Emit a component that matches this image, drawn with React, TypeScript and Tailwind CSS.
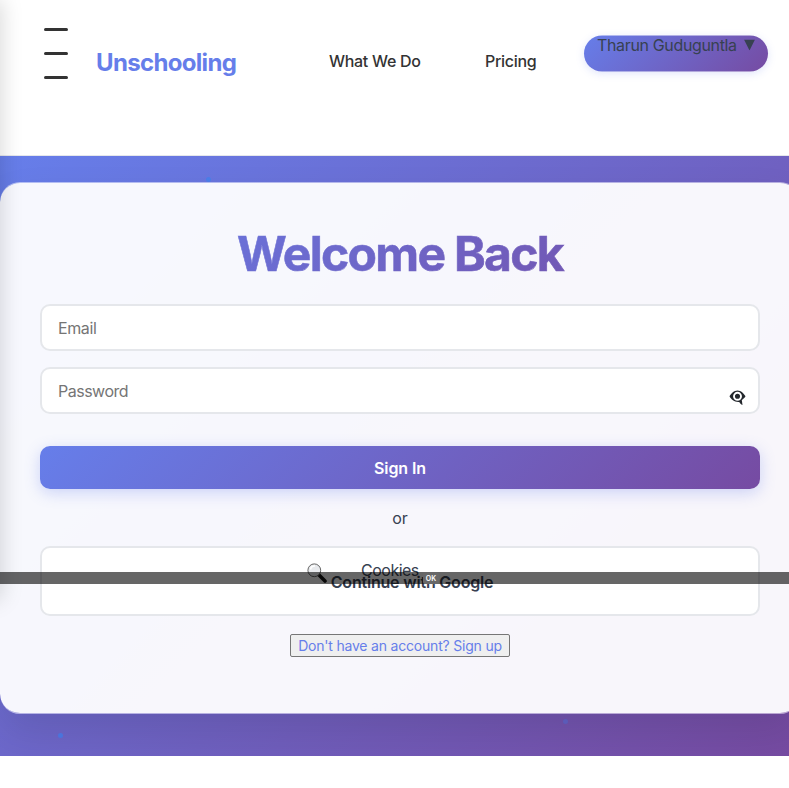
import React from "react";

const GRADIENT = "bg-[linear-gradient(135deg,#667eea_0%,#764ba2_100%)]";

function Header() {
  return (
    <header className="flex h-[156px] items-start border-b border-[#e5e7eb] bg-white pl-11 pr-[21px]">
      <button aria-label="Menu" className="mt-7 flex h-[51px] w-6 flex-col justify-between">
        <span className="h-[3px] w-6 rounded-[2px] bg-[#333]" />
        <span className="h-[3px] w-6 rounded-[2px] bg-[#333]" />
        <span className="h-[3px] w-6 rounded-[2px] bg-[#333]" />
      </button>
      <div className="ml-7 mt-[45px] w-[233px] whitespace-nowrap text-2xl leading-9 font-bold tracking-[-0.67px] text-[#667eea]">
        Unschooling
      </div>
      <nav className="mt-[49px] flex text-base leading-6 font-medium tracking-[-0.3px] whitespace-nowrap text-[#333]">
        <a className="w-[156px]">What We Do</a>
        <a>Pricing</a>
      </nav>
      <div
        className={`ml-auto mt-9 flex h-[36px] w-[184px] -translate-y-[0.5px] whitespace-nowrap rounded-[20px] pl-[13px] text-base leading-[18px] tracking-[-0.35px] text-[#374151] shadow-[0_2px_8px_rgba(102,126,234,0.2)] ${GRADIENT}`}
      >
        <span>Tharun Guduguntla</span>
        <svg className="ml-[7px] mt-[4px] h-[11px] w-[11px]" viewBox="0 0 11 11">
          <path d="M0 0H11L5.5 11Z" fill="#374151" />
        </svg>
      </div>
    </header>
  );
}

function Eye() {
  return (
    <svg className="absolute right-[12px] top-[20px] h-4 w-[17px]" viewBox="0 0 17 16">
      <path
        d="M.5 7.200C2.200 4.300 5 1.400 8.500 1.400s6.300 2.900 8 5.800c-1 1.600-2.100 2.800-3.700 3.800l.7 5c-1.600-.6-2.500-1.700-3.200-3.100C5.600 13.300 2.400 10.600.5 7.200Z"
        fill="#23272c"
      />
      <circle cx="8.500" cy="7.300" r="3.500" fill="#23272c" stroke="#fff" strokeWidth="1.900" />
    </svg>
  );
}

function Magnifier() {
  return (
    <svg className="mt-[15px] h-5 w-5 shrink-0" viewBox="0 0 20 20">
      <path d="M12 12L18 18" stroke="#161616" strokeWidth="3.600" strokeLinecap="round" />
      <circle cx="7.300" cy="7.300" r="6.400" fill="#e8eaed" stroke="#666" strokeWidth="1" />
      <path d="M3.500 6.500A4.300 4.300 0 0 1 8 3" fill="none" stroke="#fff" strokeWidth="1.500" />
    </svg>
  );
}

function LoginCard() {
  return (
    <div className="mt-[26px] flex h-[532px] w-[800px] shrink-0 flex-col rounded-[20px] border-y border-white/50 bg-white/95 bg-clip-padding px-10 shadow-[0_20px_40px_rgba(0,0,0,0.1)]">
      <h1
        className={`mt-[42px] h-[58px] whitespace-nowrap bg-clip-text text-center text-5xl leading-[58px] font-bold tracking-[-1.700px] text-transparent [-webkit-text-stroke:0.6px_transparent] ${GRADIENT}`}
      >
        Welcome Back
      </h1>
      <div className="mt-[21px] h-[47px] rounded-[10px] border-2 border-[#e5e7eb] bg-white px-4 text-base leading-[44px] tracking-[-0.4px] text-[#757575]">
        Email
      </div>
      <div className="relative mt-4 h-[47px] rounded-[10px] border-2 border-[#e5e7eb] bg-white px-4 text-base leading-[44px] tracking-[-0.5px] text-[#757575]">
        Password
        <Eye />
      </div>
      <button
        className={`mt-8 h-[43px] rounded-[10px] text-base leading-[45px] font-semibold tracking-[-0.1px] text-white shadow-[0_4px_15px_rgba(102,126,234,0.3)] ${GRADIENT}`}
      >
        Sign In
      </button>
      <div className="mt-[17px] text-center text-base leading-6 text-[#374151]">or</div>
      <button className="mt-4 flex h-[70px] justify-center rounded-[10px] border-2 border-[#e5e7eb] bg-white text-base font-semibold tracking-[-0.2px] text-[#374151]">
        <Magnifier />
        <span className="ml-1 mt-[22px] leading-6">Continue with Google</span>
      </button>
      <button className="mx-auto mt-[18px] h-[23px] w-[220px] whitespace-nowrap rounded-[2px] border border-[#767676] bg-[#efefef] text-sm leading-[21px] tracking-[-0.2px] text-[#667eea]">
        Don&#39;t have an account? Sign up
      </button>
    </div>
  );
}

export default function App() {
  return (
    <div className="relative h-[788px] w-full overflow-hidden bg-white font-['Inter',sans-serif]">
      <Header />
      <main className={`relative flex h-[600px] items-start overflow-hidden ${GRADIENT}`}>
        <i className="absolute left-[206px] top-[21px] size-[5px] rounded-full bg-[#4a7de6]" />
        <i className="absolute left-[58px] top-[577px] size-[5px] rounded-full bg-[#4a74dc]" />
        <i className="absolute left-[563px] top-[563px] size-[5px] rounded-full bg-[#5b5bb8]" />
        <LoginCard />
      </main>
      <aside className="absolute -left-[300px] top-0 h-[600px] w-[300px] bg-white shadow-[2px_0_20px_rgba(0,0,0,0.15)]" />
      <div className="absolute left-[361px] top-[558px] text-base leading-6 tracking-[-0.5px] text-[#374151]">Cookies</div>
      <div className="absolute left-0 top-[572px] flex h-3 w-full bg-black/60">
        <span className="ml-[423px] h-3 w-4 rounded-[2px] bg-[#686868] text-center text-[7px] leading-[13px] font-semibold text-white">
          OK
        </span>
      </div>
    </div>
  );
}
